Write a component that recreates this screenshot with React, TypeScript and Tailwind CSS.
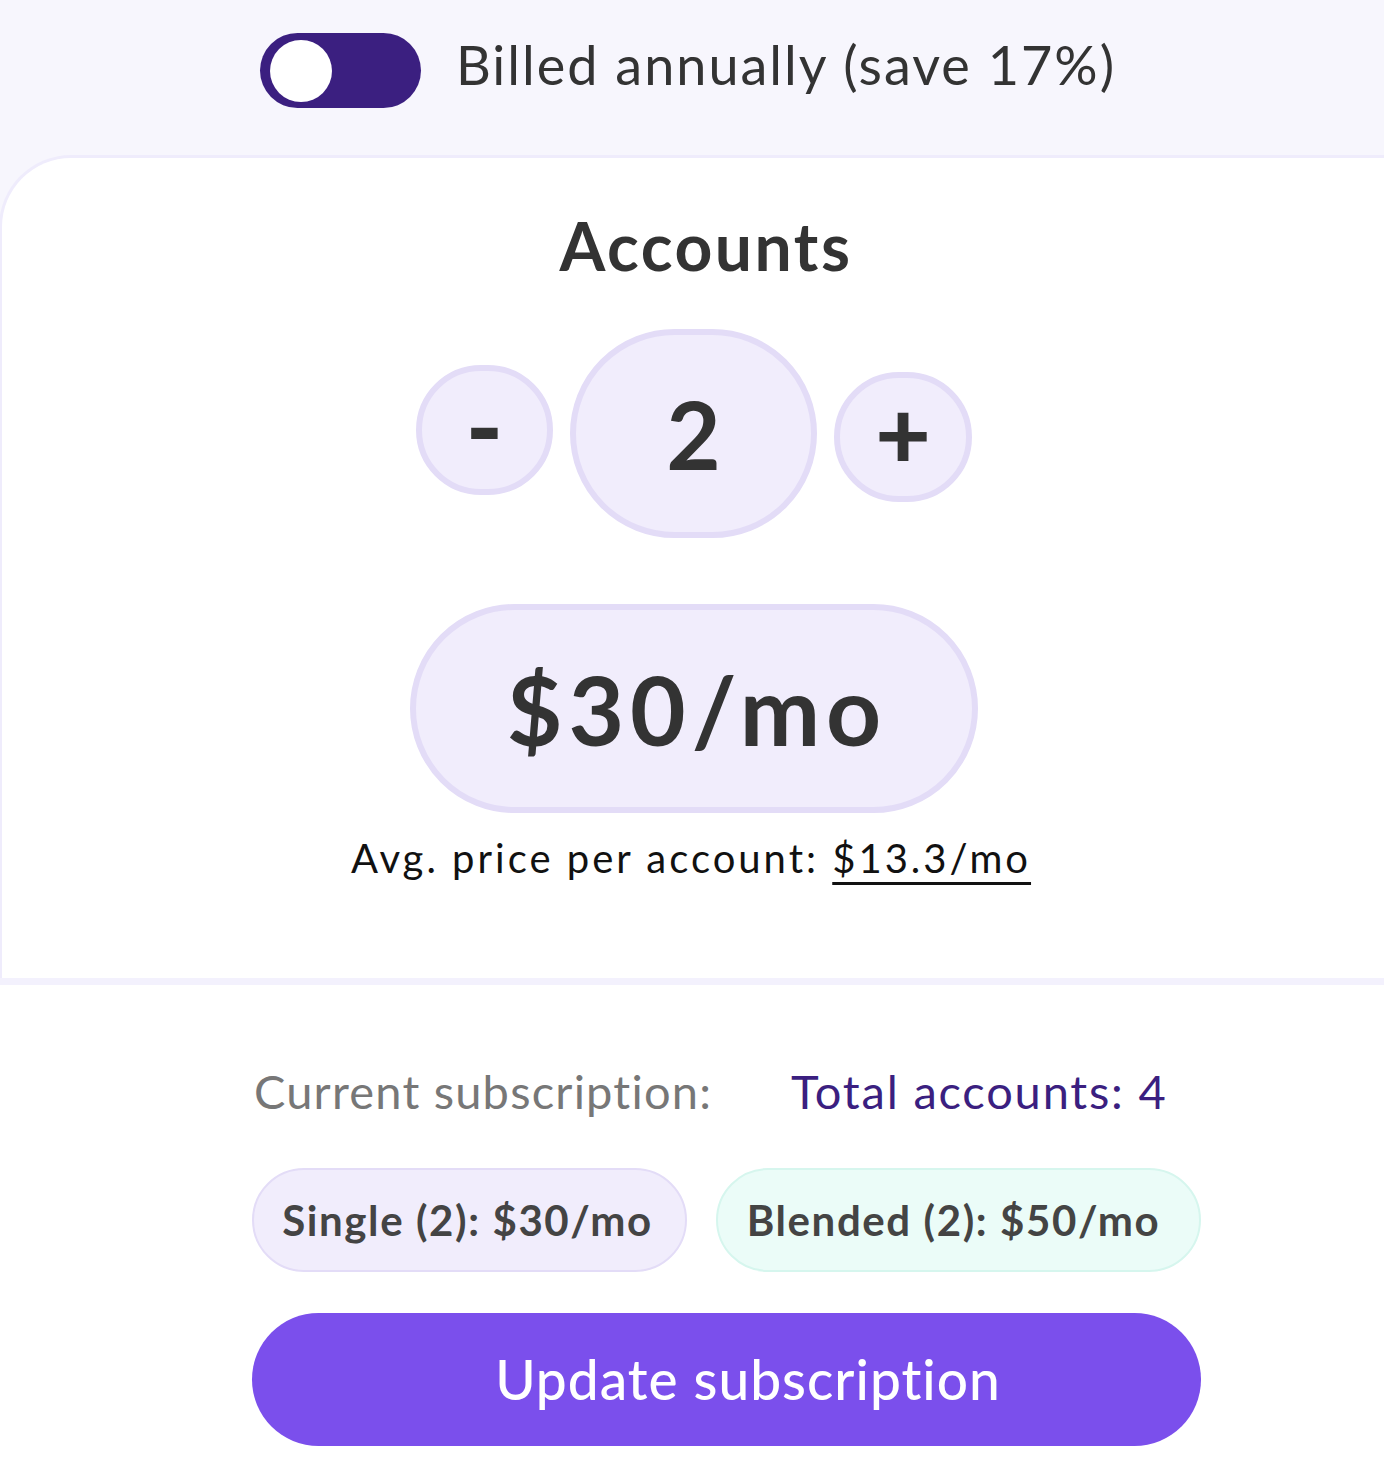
import React from "react";

export default function App() {
  return (
    <div
      className="w-[1384px] h-[1462px] bg-[#f7f6fd] overflow-hidden text-[#333333]"
      style={{ fontFamily: "Lato, 'Noto Sans', sans-serif" }}
    >
      {/* Billing toggle */}
      <div className="h-[155px] flex items-start justify-center gap-[35px] pt-[33px] pr-[8px]">
        <div className="w-[161px] h-[75px] rounded-full bg-[#3b1f80] flex items-center pl-[10px]">
          <div className="w-[62px] h-[62px] rounded-full bg-white" />
        </div>
        <span className="text-[54px] leading-none tracking-[2px] text-[#333333] mt-[5px]">Billed annually (save 17%)</span>
      </div>

      {/* Card */}
      <div className="bg-white border-t-[3px] border-l-[3px] border-[#efecfc] rounded-tl-[72px] w-[1400px] -ml-[1px]">
        <div className="w-[1384px] flex flex-col items-center pt-[55px] pb-[100px]">
          <h2 className="text-[66px] leading-none font-bold tracking-[2.5px] text-[#333333] ml-[24px]">Accounts</h2>

          <div className="mt-[50px] flex items-center gap-[17px]">
            <button className="w-[137px] h-[130px] rounded-full bg-[#f1edfc] border-[6px] border-[#e3dcf7] flex items-center justify-center -translate-y-[4px]">
              <span className="text-[100px] leading-none font-black text-[#333333] -translate-y-[6px]">-</span>
            </button>
            <div className="w-[247px] h-[209px] rounded-full bg-[#f1edfc] border-[6px] border-[#e3dcf7] flex items-center justify-center">
              <span className="text-[94px] leading-none font-bold text-[#333333]">2</span>
            </div>
            <button className="w-[138px] h-[130px] rounded-full bg-[#f1edfc] border-[6px] border-[#e3dcf7] flex items-center justify-center translate-y-[3px]">
              <span className="text-[96px] leading-none font-black text-[#333333] -translate-y-[5px]">+</span>
            </button>
          </div>

          <div className="mt-[66px] w-[568px] h-[209px] rounded-full bg-[#f1edfc] border-[6px] border-[#e3dcf7] flex items-center justify-center">
            <span className="text-[96px] leading-none font-bold tracking-[6px] text-[#333333] ml-[6px]">$30/mo</span>
          </div>

          <p className="mt-[25px] text-[40px] leading-none tracking-[3px] text-[#111111] -ml-[6px]">
            Avg. price per account:{" "}
            <span className="underline decoration-[3px] underline-offset-[9px]">$13.3/mo</span>
          </p>
        </div>
      </div>

      {/* Divider */}
      <div className="h-[7px] bg-[#f3f1fd]" />

      {/* Current subscription */}
      <div className="bg-white h-[480px]">
        <div className="ml-[252px] w-[949px] pt-[83px]">
          <div className="grid grid-cols-[539px_1fr] items-baseline">
            <span className="text-[47px] leading-none tracking-[1.2px] text-[#777777] pl-[2px]">Current subscription:</span>
            <span className="text-[47px] leading-none tracking-[1.8px] text-[#3b1f80]">Total accounts: 4</span>
          </div>

          <div className="mt-[53px] flex gap-[29px]">
            <div className="w-[435px] h-[104px] rounded-full bg-[#f1edfc] border-2 border-[#e3dcf7] flex items-center justify-center">
              <span className="text-[42px] leading-none font-bold tracking-[1.6px] text-[#444444] -ml-[4px]">Single (2): $30/mo</span>
            </div>
            <div className="w-[485px] h-[104px] rounded-full bg-[#ebfcf8] border-2 border-[#d6f6ee] flex items-center justify-center">
              <span className="text-[42px] leading-none font-bold tracking-[1.6px] text-[#444444] -ml-[10px]">Blended (2): $50/mo</span>
            </div>
          </div>

          <button className="mt-[41px] w-[949px] h-[133px] rounded-full bg-[#7b4fec] flex items-center justify-center">
            <span className="text-[55px] leading-none font-medium tracking-[1px] text-white ml-[43px]">Update subscription</span>
          </button>
        </div>
      </div>
    </div>
  );
}
